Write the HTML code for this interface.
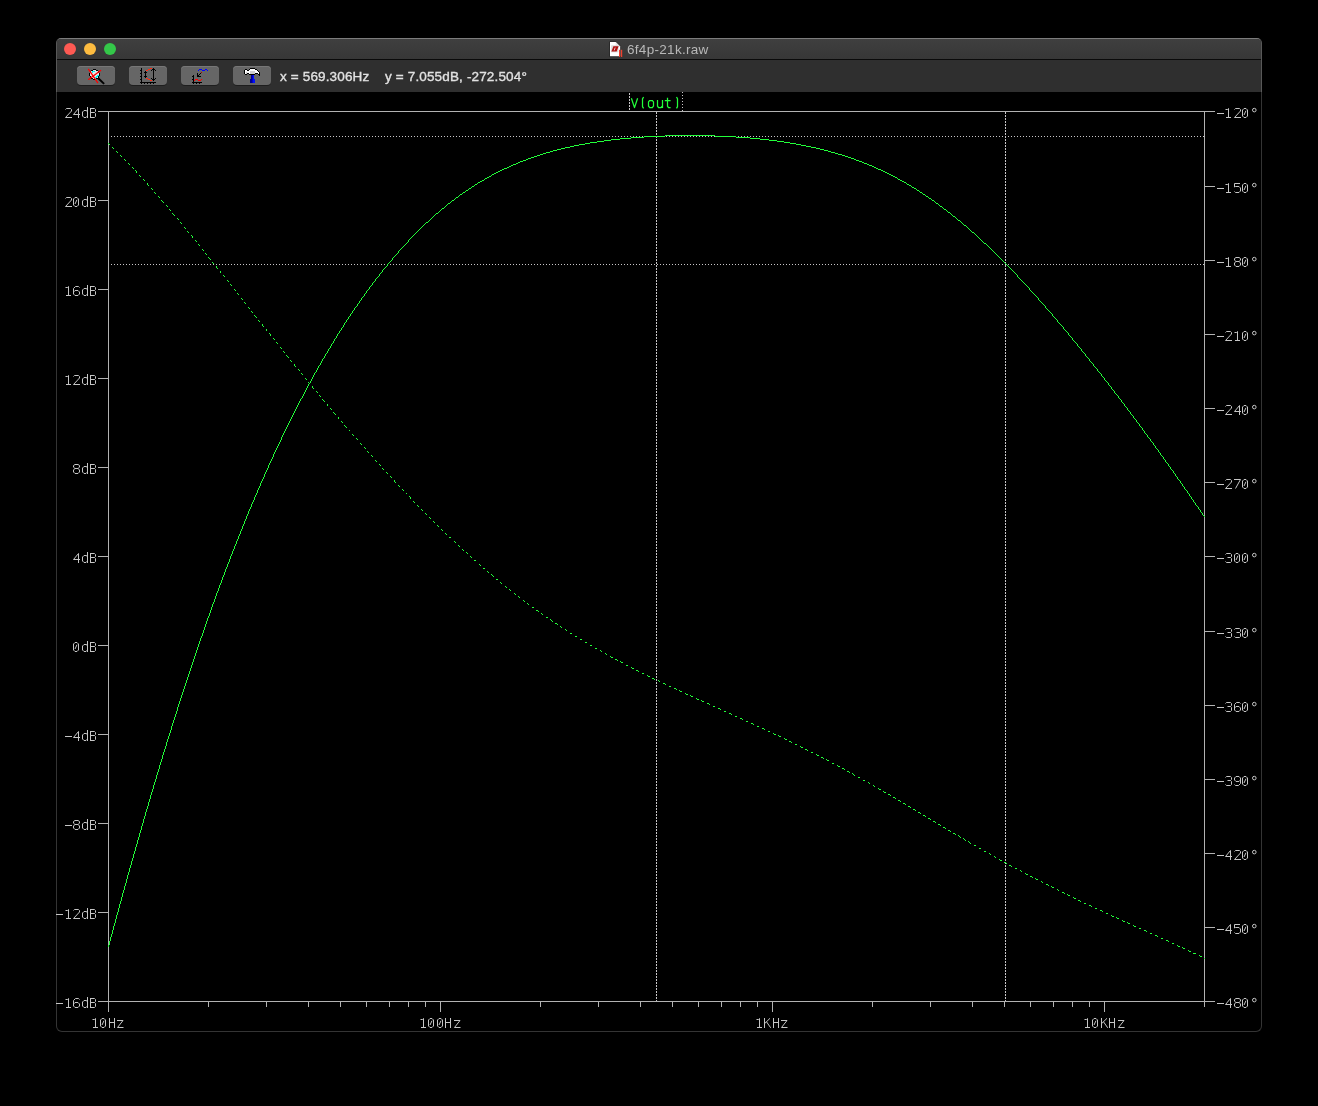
<!DOCTYPE html>
<html><head><meta charset="utf-8"><title>6f4p-21k.raw</title>
<style>
html,body{margin:0;padding:0;background:#000;}
body{width:1318px;height:1106px;position:relative;overflow:hidden;font-family:"Liberation Sans",sans-serif;}
.chrome{position:absolute;left:56px;top:38px;width:1206px;height:54px;box-sizing:border-box;border:1px solid #585858;border-top-color:#7c7c7c;border-bottom:none;border-radius:5px 5px 0 0;background:#2f2f2f;overflow:hidden;}
.body{position:absolute;left:56px;top:92px;width:1206px;height:940px;box-sizing:border-box;border:1px solid #343434;border-top:none;border-radius:0 0 6px 6px;background:#000;}
.tb{position:absolute;left:0;top:0;right:0;height:20px;background:linear-gradient(#3f3f3f,#373737);border-bottom:1px solid #0a0a0a;}
.tool{position:absolute;left:0;top:21px;right:0;height:32px;background:#2f2f2f;}
.dot{position:absolute;top:4px;width:12px;height:12px;border-radius:50%;}
.title{position:absolute;left:570px;top:0;height:20px;line-height:21px;font-size:13.5px;letter-spacing:0.3px;color:#b8b8b8;white-space:nowrap;will-change:transform;}
.btn{position:absolute;top:6px;width:38px;height:19px;border-radius:4px;background:#666666;box-shadow:0 1px 0 rgba(0,0,0,.35), inset 0 1px 0 #777;}
.read{position:absolute;top:0;height:32px;line-height:33px;font-size:13.5px;letter-spacing:0.15px;color:#e2e2e2;white-space:nowrap;-webkit-text-stroke:0.35px #e2e2e2;will-change:transform;}
</style></head><body>
<div class="body"></div>
<div class="chrome">
 <div class="tb">
  <div class="dot" style="left:7px;background:#fe5a53"></div>
  <div class="dot" style="left:27px;background:#fdbc40"></div>
  <div class="dot" style="left:47px;background:#34c749"></div>
  <div class="title">6f4p-21k.raw</div>
 </div>
 <div class="tool">
  <div class="btn" style="left:20px"></div>
  <div class="btn" style="left:72px"></div>
  <div class="btn" style="left:124px"></div>
  <div class="btn" style="left:176px"></div>
  <div class="read" id="rx" style="left:223px">x = 569.306Hz</div>
  <div class="read" id="ry" style="left:328px">y = 7.055dB, -272.504°</div>
 </div>
</div>
<svg width="1318" height="1106" style="position:absolute;left:0;top:0" shape-rendering="crispEdges">
<g stroke="#b2b2b2" stroke-width="1" fill="none">
<path d="M108.0 111.5H1205.0M108.0 1001.5H1205.0M108.5 111.5V1012.0M1204.5 111.5V1007.0"/>
<path d="M98.0 111.5H108.5M98.0 200.5H108.5M98.0 289.5H108.5M98.0 378.5H108.5M98.0 467.5H108.5M98.0 556.5H108.5M98.0 645.5H108.5M98.0 734.5H108.5M98.0 823.5H108.5M98.0 912.5H108.5M98.0 1001.5H108.5M1204.5 111.5H1215.0M1204.5 186.5H1215.0M1204.5 260.5H1215.0M1204.5 334.5H1215.0M1204.5 408.5H1215.0M1204.5 482.5H1215.0M1204.5 556.5H1215.0M1204.5 631.5H1215.0M1204.5 705.5H1215.0M1204.5 779.5H1215.0M1204.5 853.5H1215.0M1204.5 927.5H1215.0M1204.5 1001.5H1215.0M208.5 1001.5V1007.0M266.5 1001.5V1007.0M308.5 1001.5V1007.0M340.5 1001.5V1007.0M366.5 1001.5V1007.0M389.5 1001.5V1007.0M408.5 1001.5V1007.0M425.5 1001.5V1007.0M440.5 1001.5V1012.0M540.5 1001.5V1007.0M598.5 1001.5V1007.0M640.5 1001.5V1007.0M672.5 1001.5V1007.0M698.5 1001.5V1007.0M721.5 1001.5V1007.0M740.5 1001.5V1007.0M757.5 1001.5V1007.0M772.5 1001.5V1012.0M872.5 1001.5V1007.0M930.5 1001.5V1007.0M972.5 1001.5V1007.0M1004.5 1001.5V1007.0M1030.5 1001.5V1007.0M1053.5 1001.5V1007.0M1072.5 1001.5V1007.0M1089.5 1001.5V1007.0M1104.5 1001.5V1012.0"/>
</g>
<g stroke="#c8c6c8" stroke-width="1" fill="none">
<path d="M111 136.5H1204M111 264.5H1204" stroke-dasharray="1 2"/>
<path d="M656.5 112V1001M1005.5 112V1001" stroke-dasharray="2 1"/>
<path d="M629.5 93V111" stroke-dasharray="2 1"/>
<path d="M682.5 92V111" stroke-dasharray="1 2"/>
</g>
<path d="M108 945h1v2h-1zM109 941h1v4h-1zM110 937h1v4h-1zM111 934h1v3h-1zM112 930h1v4h-1zM113 926h1v4h-1zM114 923h1v3h-1zM115 919h1v4h-1zM116 915h1v4h-1zM117 912h1v3h-1zM118 908h1v4h-1zM119 904h1v4h-1zM120 901h1v3h-1zM121 897h1v4h-1zM122 893h1v4h-1zM123 890h1v3h-1zM124 886h1v4h-1zM125 883h1v3h-1zM126 879h1v4h-1zM127 875h1v4h-1zM128 872h1v3h-1zM129 868h1v4h-1zM130 865h1v3h-1zM131 861h1v4h-1zM132 858h1v3h-1zM133 854h1v4h-1zM134 851h1v3h-1zM135 847h1v4h-1zM136 844h1v3h-1zM137 840h1v4h-1zM138 837h1v3h-1zM139 833h1v4h-1zM140 830h1v3h-1zM141 826h1v4h-1zM142 823h1v3h-1zM143 819h1v4h-1zM144 816h1v3h-1zM145 812h1v4h-1zM146 809h1v3h-1zM147 806h1v3h-1zM148 802h1v4h-1zM149 799h1v3h-1zM150 795h1v4h-1zM151 792h1v3h-1zM152 789h1v3h-1zM153 785h1v4h-1zM154 782h1v3h-1zM155 779h1v3h-1zM156 775h1v4h-1zM157 772h1v3h-1zM158 769h1v3h-1zM159 765h1v4h-1zM160 762h1v3h-1zM161 759h1v3h-1zM162 755h1v4h-1zM163 752h1v3h-1zM164 749h1v3h-1zM165 746h1v3h-1zM166 742h1v4h-1zM167 739h1v3h-1zM168 736h1v3h-1zM169 733h1v3h-1zM170 730h1v3h-1zM171 726h1v4h-1zM172 723h1v3h-1zM173 720h1v3h-1zM174 717h1v3h-1zM175 714h1v3h-1zM176 711h1v3h-1zM177 707h1v4h-1zM178 704h1v3h-1zM179 701h1v3h-1zM180 698h1v3h-1zM181 695h1v3h-1zM182 692h1v3h-1zM183 689h1v3h-1zM184 686h1v3h-1zM185 683h1v3h-1zM186 680h1v3h-1zM187 677h1v3h-1zM188 674h1v3h-1zM189 671h1v3h-1zM190 668h1v3h-1zM191 665h1v3h-1zM192 662h1v3h-1zM193 659h1v3h-1zM194 656h1v3h-1zM195 653h1v3h-1zM196 650h1v3h-1zM197 647h1v3h-1zM198 644h1v3h-1zM199 641h1v3h-1zM200 638h1v3h-1zM201 636h1v2h-1zM202 633h1v3h-1zM203 630h1v3h-1zM204 627h1v3h-1zM205 624h1v3h-1zM206 621h1v3h-1zM207 618h1v3h-1zM208 616h1v2h-1zM209 613h1v3h-1zM210 610h1v3h-1zM211 607h1v3h-1zM212 604h1v3h-1zM213 602h1v2h-1zM214 599h1v3h-1zM215 596h1v3h-1zM216 593h1v3h-1zM217 591h1v2h-1zM218 588h1v3h-1zM219 585h1v3h-1zM220 583h1v2h-1zM221 580h1v3h-1zM222 577h1v3h-1zM223 575h1v2h-1zM224 572h1v3h-1zM225 569h1v3h-1zM226 567h1v2h-1zM227 564h1v3h-1zM228 562h1v2h-1zM229 559h1v3h-1zM230 556h1v3h-1zM231 554h1v2h-1zM232 551h1v3h-1zM233 549h1v2h-1zM234 546h1v3h-1zM235 544h1v2h-1zM236 541h1v3h-1zM237 539h1v2h-1zM238 536h1v3h-1zM239 534h1v2h-1zM240 531h1v3h-1zM241 529h1v2h-1zM242 526h1v3h-1zM243 524h1v2h-1zM244 521h1v3h-1zM245 519h1v2h-1zM246 516h1v3h-1zM247 514h1v2h-1zM248 511h1v3h-1zM249 509h1v2h-1zM250 507h1v2h-1zM251 504h1v3h-1zM252 502h1v2h-1zM253 500h1v2h-1zM254 497h1v3h-1zM255 495h1v2h-1zM256 493h1v2h-1zM257 490h1v3h-1zM258 488h1v2h-1zM259 486h1v2h-1zM260 483h1v3h-1zM261 481h1v2h-1zM262 479h1v2h-1zM263 477h1v2h-1zM264 474h1v3h-1zM265 472h1v2h-1zM266 470h1v2h-1zM267 468h1v2h-1zM268 465h1v3h-1zM269 463h1v2h-1zM270 461h1v2h-1zM271 459h1v2h-1zM272 457h1v2h-1zM273 454h1v3h-1zM274 452h1v2h-1zM275 450h1v2h-1zM276 448h1v2h-1zM277 446h1v2h-1zM278 444h1v2h-1zM279 442h1v2h-1zM280 440h1v2h-1zM281 437h1v3h-1zM282 435h1v2h-1zM283 433h1v2h-1zM284 431h1v2h-1zM285 429h1v2h-1zM286 427h1v2h-1zM287 425h1v2h-1zM288 423h1v2h-1zM289 421h1v2h-1zM290 419h1v2h-1zM291 417h1v2h-1zM292 415h1v2h-1zM293 413h1v2h-1zM294 411h1v2h-1zM295 409h1v2h-1zM296 407h1v2h-1zM297 405h1v2h-1zM298 403h1v2h-1zM299 401h1v2h-1zM300 399h1v2h-1zM301 398h1v1h-1zM302 396h1v2h-1zM303 394h1v2h-1zM304 392h1v2h-1zM305 390h1v2h-1zM306 388h1v2h-1zM307 386h1v2h-1zM308 384h1v2h-1zM309 383h1v1h-1zM310 381h1v2h-1zM311 379h1v2h-1zM312 377h1v2h-1zM313 375h1v2h-1zM314 373h1v2h-1zM315 372h1v1h-1zM316 370h1v2h-1zM317 368h1v2h-1zM318 366h1v2h-1zM319 365h1v1h-1zM320 363h1v2h-1zM321 361h1v2h-1zM322 359h1v2h-1zM323 358h1v1h-1zM324 356h1v2h-1zM325 354h1v2h-1zM326 353h1v1h-1zM327 351h1v2h-1zM328 349h1v2h-1zM329 348h1v1h-1zM330 346h1v2h-1zM331 344h1v2h-1zM332 343h1v1h-1zM333 341h1v2h-1zM334 339h1v2h-1zM335 338h1v1h-1zM336 336h1v2h-1zM337 334h1v2h-1zM338 333h1v1h-1zM339 331h1v2h-1zM340 330h1v1h-1zM341 328h1v2h-1zM342 327h1v1h-1zM343 325h1v2h-1zM344 323h1v2h-1zM345 322h1v1h-1zM346 320h1v2h-1zM347 319h1v1h-1zM348 317h1v2h-1zM349 316h1v1h-1zM350 314h1v2h-1zM351 313h1v1h-1zM352 311h1v2h-1zM353 310h1v1h-1zM354 308h1v2h-1zM355 307h1v1h-1zM356 306h1v1h-1zM357 304h1v2h-1zM358 303h1v1h-1zM359 301h1v2h-1zM360 300h1v1h-1zM361 298h1v2h-1zM362 297h1v1h-1zM363 296h1v1h-1zM364 294h1v2h-1zM365 293h1v1h-1zM366 291h1v2h-1zM367 290h1v1h-1zM368 289h1v1h-1zM369 287h1v2h-1zM370 286h1v1h-1zM371 285h1v1h-1zM372 283h1v2h-1zM373 282h1v1h-1zM374 281h1v1h-1zM375 279h1v2h-1zM376 278h1v1h-1zM377 277h1v1h-1zM378 276h1v1h-1zM379 274h1v2h-1zM380 273h1v1h-1zM381 272h1v1h-1zM382 270h1v2h-1zM383 269h1v1h-1zM384 268h1v1h-1zM385 267h1v1h-1zM386 266h1v1h-1zM387 264h1v2h-1zM388 263h1v1h-1zM389 262h1v1h-1zM390 261h1v1h-1zM391 260h1v1h-1zM392 258h1v2h-1zM393 257h1v1h-1zM394 256h1v1h-1zM395 255h1v1h-1zM396 254h1v1h-1zM397 253h1v1h-1zM398 251h1v2h-1zM399 250h1v1h-1zM400 249h1v1h-1zM401 248h1v1h-1zM402 247h1v1h-1zM403 246h1v1h-1zM404 245h1v1h-1zM405 244h1v1h-1zM406 243h1v1h-1zM407 242h1v1h-1zM408 240h1v2h-1zM409 239h1v1h-1zM410 238h1v1h-1zM411 237h1v1h-1zM412 236h1v1h-1zM413 235h1v1h-1zM414 234h1v1h-1zM415 233h1v1h-1zM416 232h1v1h-1zM417 231h1v1h-1zM418 230h1v1h-1zM419 229h1v1h-1zM420 228h1v1h-1zM421 227h1v1h-1zM422 226h1v1h-1zM423 225h1v1h-1zM424 224h1v1h-1zM425 223h1v1h-1zM426 222h2v1h-2zM428 221h1v1h-1zM429 220h1v1h-1zM430 219h1v1h-1zM431 218h1v1h-1zM432 217h1v1h-1zM433 216h1v1h-1zM434 215h1v1h-1zM435 214h1v1h-1zM436 213h2v1h-2zM438 212h1v1h-1zM439 211h1v1h-1zM440 210h1v1h-1zM441 209h1v1h-1zM442 208h2v1h-2zM444 207h1v1h-1zM445 206h1v1h-1zM446 205h1v1h-1zM447 204h1v1h-1zM448 203h2v1h-2zM450 202h1v1h-1zM451 201h1v1h-1zM452 200h2v1h-2zM454 199h1v1h-1zM455 198h1v1h-1zM456 197h2v1h-2zM458 196h1v1h-1zM459 195h1v1h-1zM460 194h2v1h-2zM462 193h1v1h-1zM463 192h2v1h-2zM465 191h1v1h-1zM466 190h2v1h-2zM468 189h1v1h-1zM469 188h2v1h-2zM471 187h1v1h-1zM472 186h2v1h-2zM474 185h1v1h-1zM475 184h2v1h-2zM477 183h1v1h-1zM478 182h2v1h-2zM480 181h2v1h-2zM482 180h2v1h-2zM484 179h1v1h-1zM485 178h2v1h-2zM487 177h2v1h-2zM489 176h2v1h-2zM491 175h1v1h-1zM492 174h2v1h-2zM494 173h2v1h-2zM496 172h2v1h-2zM498 171h2v1h-2zM500 170h2v1h-2zM502 169h2v1h-2zM504 168h3v1h-3zM507 167h2v1h-2zM509 166h2v1h-2zM511 165h2v1h-2zM513 164h3v1h-3zM516 163h2v1h-2zM518 162h2v1h-2zM520 161h3v1h-3zM523 160h3v1h-3zM526 159h2v1h-2zM528 158h3v1h-3zM531 157h3v1h-3zM534 156h3v1h-3zM537 155h3v1h-3zM540 154h3v1h-3zM543 153h3v1h-3zM546 152h4v1h-4zM550 151h3v1h-3zM553 150h4v1h-4zM557 149h4v1h-4zM561 148h4v1h-4zM565 147h5v1h-5zM570 146h4v1h-4zM574 145h5v1h-5zM579 144h6v1h-6zM585 143h5v1h-5zM590 142h7v1h-7zM597 141h7v1h-7zM604 140h7v1h-7zM611 139h9v1h-9zM620 138h11v1h-11zM631 137h13v1h-13zM644 136h21v1h-21zM665 135h50v1h-50zM715 136h21v1h-21zM736 137h14v1h-14zM750 138h10v1h-10zM760 139h9v1h-9zM769 140h8v1h-8zM777 141h7v1h-7zM784 142h6v1h-6zM790 143h6v1h-6zM796 144h5v1h-5zM801 145h5v1h-5zM806 146h5v1h-5zM811 147h5v1h-5zM816 148h4v1h-4zM820 149h4v1h-4zM824 150h4v1h-4zM828 151h3v1h-3zM831 152h4v1h-4zM835 153h3v1h-3zM838 154h4v1h-4zM842 155h3v1h-3zM845 156h3v1h-3zM848 157h3v1h-3zM851 158h3v1h-3zM854 159h2v1h-2zM856 160h3v1h-3zM859 161h3v1h-3zM862 162h2v1h-2zM864 163h3v1h-3zM867 164h2v1h-2zM869 165h3v1h-3zM872 166h2v1h-2zM874 167h2v1h-2zM876 168h2v1h-2zM878 169h3v1h-3zM881 170h2v1h-2zM883 171h2v1h-2zM885 172h2v1h-2zM887 173h2v1h-2zM889 174h2v1h-2zM891 175h2v1h-2zM893 176h2v1h-2zM895 177h2v1h-2zM897 178h1v1h-1zM898 179h2v1h-2zM900 180h2v1h-2zM902 181h2v1h-2zM904 182h2v1h-2zM906 183h1v1h-1zM907 184h2v1h-2zM909 185h2v1h-2zM911 186h1v1h-1zM912 187h2v1h-2zM914 188h2v1h-2zM916 189h1v1h-1zM917 190h2v1h-2zM919 191h1v1h-1zM920 192h2v1h-2zM922 193h1v1h-1zM923 194h2v1h-2zM925 195h1v1h-1zM926 196h2v1h-2zM928 197h1v1h-1zM929 198h2v1h-2zM931 199h1v1h-1zM932 200h2v1h-2zM934 201h1v1h-1zM935 202h1v1h-1zM936 203h2v1h-2zM938 204h1v1h-1zM939 205h1v1h-1zM940 206h2v1h-2zM942 207h1v1h-1zM943 208h1v1h-1zM944 209h2v1h-2zM946 210h1v1h-1zM947 211h1v1h-1zM948 212h2v1h-2zM950 213h1v1h-1zM951 214h1v1h-1zM952 215h1v1h-1zM953 216h2v1h-2zM955 217h1v1h-1zM956 218h1v1h-1zM957 219h1v1h-1zM958 220h2v1h-2zM960 221h1v1h-1zM961 222h1v1h-1zM962 223h1v1h-1zM963 224h1v1h-1zM964 225h2v1h-2zM966 226h1v1h-1zM967 227h1v1h-1zM968 228h1v1h-1zM969 229h1v1h-1zM970 230h1v1h-1zM971 231h1v1h-1zM972 232h2v1h-2zM974 233h1v1h-1zM975 234h1v1h-1zM976 235h1v1h-1zM977 236h1v1h-1zM978 237h1v1h-1zM979 238h1v1h-1zM980 239h1v1h-1zM981 240h1v1h-1zM982 241h1v1h-1zM983 242h1v1h-1zM984 243h2v1h-2zM986 244h1v1h-1zM987 245h1v1h-1zM988 246h1v1h-1zM989 247h1v1h-1zM990 248h1v1h-1zM991 249h1v1h-1zM992 250h1v1h-1zM993 251h1v1h-1zM994 252h1v1h-1zM995 253h1v1h-1zM996 254h1v1h-1zM997 255h1v1h-1zM998 256h1v1h-1zM999 257h1v1h-1zM1000 258h1v1h-1zM1001 259h1v1h-1zM1002 260h1v1h-1zM1003 261h1v1h-1zM1004 262h1v1h-1zM1005 263h1v1h-1zM1006 264h1v1h-1zM1007 265h1v1h-1zM1008 266h1v1h-1zM1009 267h1v1h-1zM1010 268h1v1h-1zM1011 269h1v1h-1zM1012 270h1v1h-1zM1013 271h1v1h-1zM1014 272h1v1h-1zM1015 273h1v1h-1zM1016 274h1v1h-1zM1017 275h1v2h-1zM1018 277h1v1h-1zM1019 278h1v1h-1zM1020 279h1v1h-1zM1021 280h1v1h-1zM1022 281h1v1h-1zM1023 282h1v1h-1zM1024 283h1v1h-1zM1025 284h1v1h-1zM1026 285h1v1h-1zM1027 286h1v1h-1zM1028 287h1v1h-1zM1029 288h1v2h-1zM1030 290h1v1h-1zM1031 291h1v1h-1zM1032 292h1v1h-1zM1033 293h1v1h-1zM1034 294h1v1h-1zM1035 295h1v1h-1zM1036 296h1v1h-1zM1037 297h1v1h-1zM1038 298h1v2h-1zM1039 300h1v1h-1zM1040 301h1v1h-1zM1041 302h1v1h-1zM1042 303h1v1h-1zM1043 304h1v1h-1zM1044 305h1v1h-1zM1045 306h1v2h-1zM1046 308h1v1h-1zM1047 309h1v1h-1zM1048 310h1v1h-1zM1049 311h1v1h-1zM1050 312h1v1h-1zM1051 313h1v1h-1zM1052 314h1v2h-1zM1053 316h1v1h-1zM1054 317h1v1h-1zM1055 318h1v1h-1zM1056 319h1v1h-1zM1057 320h1v2h-1zM1058 322h1v1h-1zM1059 323h1v1h-1zM1060 324h1v1h-1zM1061 325h1v1h-1zM1062 326h1v1h-1zM1063 327h1v2h-1zM1064 329h1v1h-1zM1065 330h1v1h-1zM1066 331h1v1h-1zM1067 332h1v1h-1zM1068 333h1v2h-1zM1069 335h1v1h-1zM1070 336h1v1h-1zM1071 337h1v1h-1zM1072 338h1v2h-1zM1073 340h1v1h-1zM1074 341h1v1h-1zM1075 342h1v1h-1zM1076 343h1v1h-1zM1077 344h1v2h-1zM1078 346h1v1h-1zM1079 347h1v1h-1zM1080 348h1v1h-1zM1081 349h1v2h-1zM1082 351h1v1h-1zM1083 352h1v1h-1zM1084 353h1v1h-1zM1085 354h1v2h-1zM1086 356h1v1h-1zM1087 357h1v1h-1zM1088 358h1v1h-1zM1089 359h1v2h-1zM1090 361h1v1h-1zM1091 362h1v1h-1zM1092 363h1v1h-1zM1093 364h1v2h-1zM1094 366h1v1h-1zM1095 367h1v1h-1zM1096 368h1v1h-1zM1097 369h1v2h-1zM1098 371h1v1h-1zM1099 372h1v1h-1zM1100 373h1v1h-1zM1101 374h1v2h-1zM1102 376h1v1h-1zM1103 377h1v1h-1zM1104 378h1v2h-1zM1105 380h1v1h-1zM1106 381h1v1h-1zM1107 382h1v1h-1zM1108 383h1v2h-1zM1109 385h1v1h-1zM1110 386h1v1h-1zM1111 387h1v2h-1zM1112 389h1v1h-1zM1113 390h1v1h-1zM1114 391h1v2h-1zM1115 393h1v1h-1zM1116 394h1v1h-1zM1117 395h1v1h-1zM1118 396h1v2h-1zM1119 398h1v1h-1zM1120 399h1v1h-1zM1121 400h1v2h-1zM1122 402h1v1h-1zM1123 403h1v1h-1zM1124 404h1v2h-1zM1125 406h1v1h-1zM1126 407h1v1h-1zM1127 408h1v2h-1zM1128 410h1v1h-1zM1129 411h1v1h-1zM1130 412h1v2h-1zM1131 414h1v1h-1zM1132 415h1v1h-1zM1133 416h1v2h-1zM1134 418h1v1h-1zM1135 419h1v1h-1zM1136 420h1v2h-1zM1137 422h1v1h-1zM1138 423h1v1h-1zM1139 424h1v2h-1zM1140 426h1v1h-1zM1141 427h1v1h-1zM1142 428h1v2h-1zM1143 430h1v1h-1zM1144 431h1v2h-1zM1145 433h1v1h-1zM1146 434h1v1h-1zM1147 435h1v2h-1zM1148 437h1v1h-1zM1149 438h1v1h-1zM1150 439h1v2h-1zM1151 441h1v1h-1zM1152 442h1v1h-1zM1153 443h1v2h-1zM1154 445h1v1h-1zM1155 446h1v2h-1zM1156 448h1v1h-1zM1157 449h1v1h-1zM1158 450h1v2h-1zM1159 452h1v1h-1zM1160 453h1v2h-1zM1161 455h1v1h-1zM1162 456h1v1h-1zM1163 457h1v2h-1zM1164 459h1v1h-1zM1165 460h1v2h-1zM1166 462h1v1h-1zM1167 463h1v1h-1zM1168 464h1v2h-1zM1169 466h1v1h-1zM1170 467h1v2h-1zM1171 469h1v1h-1zM1172 470h1v1h-1zM1173 471h1v2h-1zM1174 473h1v1h-1zM1175 474h1v2h-1zM1176 476h1v1h-1zM1177 477h1v2h-1zM1178 479h1v1h-1zM1179 480h1v1h-1zM1180 481h1v2h-1zM1181 483h1v1h-1zM1182 484h1v2h-1zM1183 486h1v1h-1zM1184 487h1v2h-1zM1185 489h1v1h-1zM1186 490h1v1h-1zM1187 491h1v2h-1zM1188 493h1v1h-1zM1189 494h1v2h-1zM1190 496h1v1h-1zM1191 497h1v2h-1zM1192 499h1v1h-1zM1193 500h1v2h-1zM1194 502h1v1h-1zM1195 503h1v2h-1zM1196 505h1v1h-1zM1197 506h1v1h-1zM1198 507h1v2h-1zM1199 509h1v1h-1zM1200 510h1v2h-1zM1201 512h1v1h-1zM1202 513h1v2h-1zM1203 515h1v1h-1zM1204 516h1v1h-1z" fill="#22ff3a"/>
<path d="M108 143h1v1h-1zM109 144h1v1h-1zM112 147h1v1h-1zM113 148h1v1h-1zM116 151h1v1h-1zM117 152h1v1h-1zM120 155h1v1h-1zM121 156h1v1h-1zM124 159h1v1h-1zM125 160h1v1h-1zM128 163h1v1h-1zM129 164h1v1h-1zM132 167h1v1h-1zM133 168h1v1h-1zM135 170h1v1h-1zM136 171h1v2h-1zM139 175h1v1h-1zM140 176h1v1h-1zM143 179h1v1h-1zM144 180h1v1h-1zM147 183h1v2h-1zM148 185h1v1h-1zM151 188h1v1h-1zM152 189h1v1h-1zM154 192h1v1h-1zM155 193h1v1h-1zM158 196h1v1h-1zM159 197h1v1h-1zM161 200h1v1h-1zM162 201h1v1h-1zM163 202h1v1h-1zM166 205h1v1h-1zM167 206h1v1h-1zM169 209h1v1h-1zM170 210h1v1h-1zM172 213h1v1h-1zM173 214h1v1h-1zM174 215h1v1h-1zM177 218h1v1h-1zM178 219h1v1h-1zM180 222h1v1h-1zM181 223h1v1h-1zM184 227h1v1h-1zM185 228h1v1h-1zM187 231h1v1h-1zM188 232h1v1h-1zM191 235h1v1h-1zM192 236h1v2h-1zM195 240h1v1h-1zM196 241h1v1h-1zM198 244h1v1h-1zM199 245h1v1h-1zM202 249h1v1h-1zM203 250h1v1h-1zM205 253h1v1h-1zM206 254h1v1h-1zM208 257h1v1h-1zM209 258h1v1h-1zM210 259h1v1h-1zM212 262h1v1h-1zM213 263h1v1h-1zM216 266h1v2h-1zM217 268h1v1h-1zM220 271h1v2h-1zM223 275h1v1h-1zM224 276h1v1h-1zM227 280h1v1h-1zM228 281h1v1h-1zM230 284h1v1h-1zM231 285h1v1h-1zM234 289h1v1h-1zM235 290h1v1h-1zM237 293h1v1h-1zM238 294h1v1h-1zM241 298h1v1h-1zM242 299h1v1h-1zM244 302h1v1h-1zM245 303h1v1h-1zM248 307h1v1h-1zM249 308h1v1h-1zM251 311h1v1h-1zM252 312h1v1h-1zM254 315h1v1h-1zM255 316h1v1h-1zM256 317h1v1h-1zM258 320h1v1h-1zM259 321h1v1h-1zM262 324h1v2h-1zM263 326h1v1h-1zM266 329h1v2h-1zM269 333h1v1h-1zM270 334h1v2h-1zM273 338h1v1h-1zM274 339h1v1h-1zM276 342h1v1h-1zM277 343h1v1h-1zM280 347h1v1h-1zM281 348h1v1h-1zM283 351h1v1h-1zM284 352h1v1h-1zM286 355h1v1h-1zM287 356h1v1h-1zM288 357h1v1h-1zM290 360h1v1h-1zM291 361h1v1h-1zM294 364h1v2h-1zM295 366h1v1h-1zM298 369h1v1h-1zM299 370h1v1h-1zM301 373h1v1h-1zM302 374h1v1h-1zM305 378h1v1h-1zM306 379h1v1h-1zM308 382h1v1h-1zM309 383h1v1h-1zM312 386h1v2h-1zM313 388h1v1h-1zM316 391h1v1h-1zM317 392h1v1h-1zM319 395h1v1h-1zM320 396h1v1h-1zM322 399h1v1h-1zM323 400h1v1h-1zM324 401h1v1h-1zM327 404h1v2h-1zM330 408h1v1h-1zM331 409h1v1h-1zM333 412h1v1h-1zM334 413h1v1h-1zM335 414h1v1h-1zM338 417h1v2h-1zM341 421h1v1h-1zM342 422h1v1h-1zM344 425h1v1h-1zM345 426h1v1h-1zM346 427h1v1h-1zM349 430h1v1h-1zM352 434h1v1h-1zM353 435h1v1h-1zM356 438h1v1h-1zM357 439h1v1h-1zM360 443h1v1h-1zM361 444h1v1h-1zM364 447h1v1h-1zM365 448h1v1h-1zM367 451h1v1h-1zM368 452h1v1h-1zM371 455h1v1h-1zM372 456h1v1h-1zM375 460h1v1h-1zM376 461h1v1h-1zM379 464h1v1h-1zM380 465h1v1h-1zM382 468h1v1h-1zM383 469h1v1h-1zM386 472h1v1h-1zM387 473h1v1h-1zM390 476h1v1h-1zM391 477h1v1h-1zM394 480h1v2h-1zM395 482h1v1h-1zM398 485h1v1h-1zM399 486h1v1h-1zM402 489h1v1h-1zM403 490h1v1h-1zM406 493h1v1h-1zM409 496h1v1h-1zM410 497h1v2h-1zM413 501h1v1h-1zM414 502h1v1h-1zM417 505h1v1h-1zM418 506h1v1h-1zM421 509h1v1h-1zM422 510h1v1h-1zM425 513h1v1h-1zM426 514h1v1h-1zM429 517h1v1h-1zM430 518h1v1h-1zM433 521h1v1h-1zM434 522h1v1h-1zM437 525h1v1h-1zM438 526h1v1h-1zM441 529h1v1h-1zM442 530h1v1h-1zM445 533h1v1h-1zM446 534h1v1h-1zM449 537h2v1h-2zM454 541h1v1h-1zM455 542h1v1h-1zM458 545h1v1h-1zM459 546h1v1h-1zM462 549h1v1h-1zM463 550h1v1h-1zM466 552h1v1h-1zM467 553h1v1h-1zM470 556h1v1h-1zM471 557h1v1h-1zM474 560h2v1h-2zM479 564h1v1h-1zM480 565h1v1h-1zM483 568h2v1h-2zM487 571h1v1h-1zM488 572h1v1h-1zM491 574h1v1h-1zM492 575h1v1h-1zM493 576h1v1h-1zM496 579h2v1h-2zM500 582h1v1h-1zM501 583h1v1h-1zM505 586h1v1h-1zM506 587h1v1h-1zM509 589h1v1h-1zM510 590h1v1h-1zM514 593h1v1h-1zM515 594h1v1h-1zM518 596h1v1h-1zM519 597h1v1h-1zM523 600h1v1h-1zM524 601h1v1h-1zM527 603h1v1h-1zM528 604h1v1h-1zM532 607h2v1h-2zM536 610h2v1h-2zM538 611h1v1h-1zM541 613h1v1h-1zM542 614h1v1h-1zM546 617h2v1h-2zM550 619h1v1h-1zM551 620h1v1h-1zM552 621h1v1h-1zM555 623h2v1h-2zM557 624h1v1h-1zM560 626h1v1h-1zM561 627h1v1h-1zM565 629h1v1h-1zM566 630h1v1h-1zM570 633h2v1h-2zM575 636h2v1h-2zM580 639h2v1h-2zM585 642h2v1h-2zM590 645h2v1h-2zM595 648h2v1h-2zM600 650h1v1h-1zM601 651h1v1h-1zM605 653h1v1h-1zM606 654h1v1h-1zM610 656h1v1h-1zM611 657h2v1h-2zM615 659h2v1h-2zM617 660h1v1h-1zM620 661h1v1h-1zM621 662h2v1h-2zM626 665h2v1h-2zM631 667h1v1h-1zM632 668h2v1h-2zM636 670h2v1h-2zM638 671h1v1h-1zM642 673h2v1h-2zM647 675h1v1h-1zM648 676h2v1h-2zM652 678h2v1h-2zM654 679h1v1h-1zM658 680h1v1h-1zM659 681h1v1h-1zM663 683h2v1h-2zM665 684h1v1h-1zM669 686h2v1h-2zM674 688h2v1h-2zM676 689h1v1h-1zM679 690h1v1h-1zM680 691h2v1h-2zM685 693h1v1h-1zM686 694h2v1h-2zM690 695h1v1h-1zM691 696h2v1h-2zM696 698h1v1h-1zM697 699h2v1h-2zM701 700h1v1h-1zM702 701h2v1h-2zM707 703h2v1h-2zM709 704h1v1h-1zM713 706h2v1h-2zM718 708h2v1h-2zM720 709h1v1h-1zM724 711h2v1h-2zM729 713h2v1h-2zM731 714h1v1h-1zM735 716h2v1h-2zM740 718h2v1h-2zM742 719h1v1h-1zM746 721h2v1h-2zM751 723h2v1h-2zM753 724h1v1h-1zM757 726h2v1h-2zM762 728h2v1h-2zM764 729h1v1h-1zM768 731h2v1h-2zM773 733h1v1h-1zM774 734h2v1h-2zM778 735h1v1h-1zM779 736h2v1h-2zM784 738h1v1h-1zM785 739h2v1h-2zM789 741h2v1h-2zM791 742h1v1h-1zM795 744h2v1h-2zM800 746h1v1h-1zM801 747h2v1h-2zM805 749h2v1h-2zM807 750h1v1h-1zM811 752h2v1h-2zM816 754h1v1h-1zM817 755h2v1h-2zM821 757h2v1h-2zM823 758h1v1h-1zM826 759h1v1h-1zM827 760h2v1h-2zM832 763h2v1h-2zM837 765h1v1h-1zM838 766h2v1h-2zM842 768h2v1h-2zM844 769h1v1h-1zM847 771h2v1h-2zM849 772h1v1h-1zM852 773h1v1h-1zM853 774h1v1h-1zM854 775h1v1h-1zM858 777h2v1h-2zM863 780h2v1h-2zM868 782h1v1h-1zM869 783h1v1h-1zM873 785h1v1h-1zM874 786h1v1h-1zM878 788h1v1h-1zM879 789h2v1h-2zM883 791h1v1h-1zM884 792h2v1h-2zM888 794h2v1h-2zM890 795h1v1h-1zM893 797h2v1h-2zM895 798h1v1h-1zM898 800h2v1h-2zM900 801h1v1h-1zM903 803h2v1h-2zM905 804h1v1h-1zM908 806h2v1h-2zM910 807h1v1h-1zM913 809h2v1h-2zM915 810h1v1h-1zM918 812h2v1h-2zM920 813h1v1h-1zM923 815h2v1h-2zM925 816h1v1h-1zM928 818h2v1h-2zM930 819h1v1h-1zM933 821h2v1h-2zM935 822h1v1h-1zM938 824h2v1h-2zM940 825h1v1h-1zM943 827h2v1h-2zM945 828h1v1h-1zM948 830h2v1h-2zM950 831h1v1h-1zM953 833h2v1h-2zM955 834h1v1h-1zM958 835h1v1h-1zM959 836h1v1h-1zM960 837h1v1h-1zM963 838h1v1h-1zM964 839h1v1h-1zM965 840h1v1h-1zM968 841h1v1h-1zM969 842h1v1h-1zM970 843h1v1h-1zM974 845h2v1h-2zM979 848h2v1h-2zM984 851h2v1h-2zM989 853h1v1h-1zM990 854h1v1h-1zM994 856h1v1h-1zM995 857h1v1h-1zM999 859h1v1h-1zM1000 860h2v1h-2zM1004 862h2v1h-2zM1006 863h1v1h-1zM1009 865h2v1h-2zM1011 866h1v1h-1zM1015 868h2v1h-2zM1020 870h1v1h-1zM1021 871h1v1h-1zM1025 873h1v1h-1zM1026 874h2v1h-2zM1030 876h2v1h-2zM1032 877h1v1h-1zM1035 878h1v1h-1zM1036 879h2v1h-2zM1041 881h1v1h-1zM1042 882h1v1h-1zM1046 884h2v1h-2zM1048 885h1v1h-1zM1051 886h1v1h-1zM1052 887h2v1h-2zM1057 889h1v1h-1zM1058 890h1v1h-1zM1062 892h2v1h-2zM1064 893h1v1h-1zM1067 894h1v1h-1zM1068 895h2v1h-2zM1073 897h1v1h-1zM1074 898h2v1h-2zM1078 900h2v1h-2zM1080 901h1v1h-1zM1084 903h2v1h-2zM1089 905h2v1h-2zM1091 906h1v1h-1zM1095 908h2v1h-2zM1100 910h2v1h-2zM1102 911h1v1h-1zM1106 913h2v1h-2zM1111 915h1v1h-1zM1112 916h2v1h-2zM1116 917h1v1h-1zM1117 918h2v1h-2zM1122 920h1v1h-1zM1123 921h2v1h-2zM1127 922h1v1h-1zM1128 923h2v1h-2zM1133 925h1v1h-1zM1134 926h2v1h-2zM1139 928h2v1h-2zM1144 930h2v1h-2zM1146 931h1v1h-1zM1150 933h2v1h-2zM1155 935h2v1h-2zM1157 936h1v1h-1zM1161 938h2v1h-2zM1166 940h2v1h-2zM1168 941h1v1h-1zM1172 943h2v1h-2zM1177 945h1v1h-1zM1178 946h2v1h-2zM1182 947h1v1h-1zM1183 948h2v1h-2zM1188 950h1v1h-1zM1189 951h2v1h-2zM1193 953h3v1h-3zM1199 955h1v1h-1zM1200 956h2v1h-2zM1204 958h1v1h-1z" fill="#22ff3a"/>
<g shape-rendering="geometricPrecision" stroke="#c6c6c6" stroke-width="1" fill="none" stroke-linejoin="round" stroke-linecap="butt">
<path transform="translate(65 108)" d="M.5 1.5L1.5 .5H5.5L6.5 1.5V3L.5 9.5H7"/><path transform="translate(73 108)" d="M5.5 .5L.5 6.5H7M5.5 .5V10"/><path transform="translate(82 108)" d="M5.5 -1V10M5.5 4L4.5 2.5H2L.5 4V8L2 9.5H4L5.5 8"/><path transform="translate(90 108)" d="M.5 0V10M.5 .5H4.5L5.5 1.5V3.5L4.5 4.5H.5M4.5 4.5L5.5 5.5V8.5L4.5 9.5H.5"/>
<path transform="translate(65 197)" d="M.5 1.5L1.5 .5H5.5L6.5 1.5V3L.5 9.5H7"/><path transform="translate(73 197)" d="M2 .5H4L5.5 2V8L4 9.5H2L.5 8V2ZM4 2.7L2 7"/><path transform="translate(82 197)" d="M5.5 -1V10M5.5 4L4.5 2.5H2L.5 4V8L2 9.5H4L5.5 8"/><path transform="translate(90 197)" d="M.5 0V10M.5 .5H4.5L5.5 1.5V3.5L4.5 4.5H.5M4.5 4.5L5.5 5.5V8.5L4.5 9.5H.5"/>
<path transform="translate(65 286)" d="M.5 1.5H2.5L3.5 .5V9.5M1 9.5H6"/><path transform="translate(73 286)" d="M6.5 1.5L5.5 .5H2.5L.5 2.5V8L2 9.5H5L6.5 8V6L5 4.5H2L.5 6"/><path transform="translate(82 286)" d="M5.5 -1V10M5.5 4L4.5 2.5H2L.5 4V8L2 9.5H4L5.5 8"/><path transform="translate(90 286)" d="M.5 0V10M.5 .5H4.5L5.5 1.5V3.5L4.5 4.5H.5M4.5 4.5L5.5 5.5V8.5L4.5 9.5H.5"/>
<path transform="translate(65 375)" d="M.5 1.5H2.5L3.5 .5V9.5M1 9.5H6"/><path transform="translate(73 375)" d="M.5 1.5L1.5 .5H5.5L6.5 1.5V3L.5 9.5H7"/><path transform="translate(82 375)" d="M5.5 -1V10M5.5 4L4.5 2.5H2L.5 4V8L2 9.5H4L5.5 8"/><path transform="translate(90 375)" d="M.5 0V10M.5 .5H4.5L5.5 1.5V3.5L4.5 4.5H.5M4.5 4.5L5.5 5.5V8.5L4.5 9.5H.5"/>
<path transform="translate(73 464)" d="M2 .5H5L6.5 1.5V3.2L5 4.5H2L.5 3.2V1.5ZM2 4.5L.5 6V8L2 9.5H5L6.5 8V6L5 4.5"/><path transform="translate(82 464)" d="M5.5 -1V10M5.5 4L4.5 2.5H2L.5 4V8L2 9.5H4L5.5 8"/><path transform="translate(90 464)" d="M.5 0V10M.5 .5H4.5L5.5 1.5V3.5L4.5 4.5H.5M4.5 4.5L5.5 5.5V8.5L4.5 9.5H.5"/>
<path transform="translate(73 553)" d="M5.5 .5L.5 6.5H7M5.5 .5V10"/><path transform="translate(82 553)" d="M5.5 -1V10M5.5 4L4.5 2.5H2L.5 4V8L2 9.5H4L5.5 8"/><path transform="translate(90 553)" d="M.5 0V10M.5 .5H4.5L5.5 1.5V3.5L4.5 4.5H.5M4.5 4.5L5.5 5.5V8.5L4.5 9.5H.5"/>
<path transform="translate(73 642)" d="M2 .5H4L5.5 2V8L4 9.5H2L.5 8V2ZM4 2.7L2 7"/><path transform="translate(82 642)" d="M5.5 -1V10M5.5 4L4.5 2.5H2L.5 4V8L2 9.5H4L5.5 8"/><path transform="translate(90 642)" d="M.5 0V10M.5 .5H4.5L5.5 1.5V3.5L4.5 4.5H.5M4.5 4.5L5.5 5.5V8.5L4.5 9.5H.5"/>
<path transform="translate(65 731)" d="M0 5.5H7"/><path transform="translate(73 731)" d="M5.5 .5L.5 6.5H7M5.5 .5V10"/><path transform="translate(82 731)" d="M5.5 -1V10M5.5 4L4.5 2.5H2L.5 4V8L2 9.5H4L5.5 8"/><path transform="translate(90 731)" d="M.5 0V10M.5 .5H4.5L5.5 1.5V3.5L4.5 4.5H.5M4.5 4.5L5.5 5.5V8.5L4.5 9.5H.5"/>
<path transform="translate(65 820)" d="M0 5.5H7"/><path transform="translate(73 820)" d="M2 .5H5L6.5 1.5V3.2L5 4.5H2L.5 3.2V1.5ZM2 4.5L.5 6V8L2 9.5H5L6.5 8V6L5 4.5"/><path transform="translate(82 820)" d="M5.5 -1V10M5.5 4L4.5 2.5H2L.5 4V8L2 9.5H4L5.5 8"/><path transform="translate(90 820)" d="M.5 0V10M.5 .5H4.5L5.5 1.5V3.5L4.5 4.5H.5M4.5 4.5L5.5 5.5V8.5L4.5 9.5H.5"/>
<path transform="translate(56 909)" d="M0 5.5H7"/><path transform="translate(65 909)" d="M.5 1.5H2.5L3.5 .5V9.5M1 9.5H6"/><path transform="translate(73 909)" d="M.5 1.5L1.5 .5H5.5L6.5 1.5V3L.5 9.5H7"/><path transform="translate(82 909)" d="M5.5 -1V10M5.5 4L4.5 2.5H2L.5 4V8L2 9.5H4L5.5 8"/><path transform="translate(90 909)" d="M.5 0V10M.5 .5H4.5L5.5 1.5V3.5L4.5 4.5H.5M4.5 4.5L5.5 5.5V8.5L4.5 9.5H.5"/>
<path transform="translate(56 998)" d="M0 5.5H7"/><path transform="translate(65 998)" d="M.5 1.5H2.5L3.5 .5V9.5M1 9.5H6"/><path transform="translate(73 998)" d="M6.5 1.5L5.5 .5H2.5L.5 2.5V8L2 9.5H5L6.5 8V6L5 4.5H2L.5 6"/><path transform="translate(82 998)" d="M5.5 -1V10M5.5 4L4.5 2.5H2L.5 4V8L2 9.5H4L5.5 8"/><path transform="translate(90 998)" d="M.5 0V10M.5 .5H4.5L5.5 1.5V3.5L4.5 4.5H.5M4.5 4.5L5.5 5.5V8.5L4.5 9.5H.5"/>
<path transform="translate(1217 108)" d="M0 5.5H7"/><path transform="translate(1225 108)" d="M.5 1.5H2.5L3.5 .5V9.5M1 9.5H6"/><path transform="translate(1234 108)" d="M.5 1.5L1.5 .5H5.5L6.5 1.5V3L.5 9.5H7"/><path transform="translate(1242 108)" d="M2 .5H4L5.5 2V8L4 9.5H2L.5 8V2ZM4 2.7L2 7"/><circle cx="1254.3" cy="110.1" r="1.8"/>
<path transform="translate(1217 183)" d="M0 5.5H7"/><path transform="translate(1225 183)" d="M.5 1.5H2.5L3.5 .5V9.5M1 9.5H6"/><path transform="translate(1234 183)" d="M6 .5H.5V4L1.5 3.5H5L6.5 5V8L5 9.5H1.5L.5 8.5"/><path transform="translate(1242 183)" d="M2 .5H4L5.5 2V8L4 9.5H2L.5 8V2ZM4 2.7L2 7"/><circle cx="1254.3" cy="185.1" r="1.8"/>
<path transform="translate(1217 257)" d="M0 5.5H7"/><path transform="translate(1225 257)" d="M.5 1.5H2.5L3.5 .5V9.5M1 9.5H6"/><path transform="translate(1234 257)" d="M2 .5H5L6.5 1.5V3.2L5 4.5H2L.5 3.2V1.5ZM2 4.5L.5 6V8L2 9.5H5L6.5 8V6L5 4.5"/><path transform="translate(1242 257)" d="M2 .5H4L5.5 2V8L4 9.5H2L.5 8V2ZM4 2.7L2 7"/><circle cx="1254.3" cy="259.1" r="1.8"/>
<path transform="translate(1217 331)" d="M0 5.5H7"/><path transform="translate(1225 331)" d="M.5 1.5L1.5 .5H5.5L6.5 1.5V3L.5 9.5H7"/><path transform="translate(1234 331)" d="M.5 1.5H2.5L3.5 .5V9.5M1 9.5H6"/><path transform="translate(1242 331)" d="M2 .5H4L5.5 2V8L4 9.5H2L.5 8V2ZM4 2.7L2 7"/><circle cx="1254.3" cy="333.1" r="1.8"/>
<path transform="translate(1217 405)" d="M0 5.5H7"/><path transform="translate(1225 405)" d="M.5 1.5L1.5 .5H5.5L6.5 1.5V3L.5 9.5H7"/><path transform="translate(1234 405)" d="M5.5 .5L.5 6.5H7M5.5 .5V10"/><path transform="translate(1242 405)" d="M2 .5H4L5.5 2V8L4 9.5H2L.5 8V2ZM4 2.7L2 7"/><circle cx="1254.3" cy="407.1" r="1.8"/>
<path transform="translate(1217 479)" d="M0 5.5H7"/><path transform="translate(1225 479)" d="M.5 1.5L1.5 .5H5.5L6.5 1.5V3L.5 9.5H7"/><path transform="translate(1234 479)" d="M0 .5H6.5L1.5 9.5"/><path transform="translate(1242 479)" d="M2 .5H4L5.5 2V8L4 9.5H2L.5 8V2ZM4 2.7L2 7"/><circle cx="1254.3" cy="481.1" r="1.8"/>
<path transform="translate(1217 553)" d="M0 5.5H7"/><path transform="translate(1225 553)" d="M.5 1.5L1.5 .5H5.5L6.5 1.5V3.5L5.5 4.5H2.5M5.5 4.5L6.5 5.5V8.5L5.5 9.5H1.5L.5 8.5"/><path transform="translate(1234 553)" d="M2 .5H4L5.5 2V8L4 9.5H2L.5 8V2ZM4 2.7L2 7"/><path transform="translate(1242 553)" d="M2 .5H4L5.5 2V8L4 9.5H2L.5 8V2ZM4 2.7L2 7"/><circle cx="1254.3" cy="555.1" r="1.8"/>
<path transform="translate(1217 628)" d="M0 5.5H7"/><path transform="translate(1225 628)" d="M.5 1.5L1.5 .5H5.5L6.5 1.5V3.5L5.5 4.5H2.5M5.5 4.5L6.5 5.5V8.5L5.5 9.5H1.5L.5 8.5"/><path transform="translate(1234 628)" d="M.5 1.5L1.5 .5H5.5L6.5 1.5V3.5L5.5 4.5H2.5M5.5 4.5L6.5 5.5V8.5L5.5 9.5H1.5L.5 8.5"/><path transform="translate(1242 628)" d="M2 .5H4L5.5 2V8L4 9.5H2L.5 8V2ZM4 2.7L2 7"/><circle cx="1254.3" cy="630.1" r="1.8"/>
<path transform="translate(1217 702)" d="M0 5.5H7"/><path transform="translate(1225 702)" d="M.5 1.5L1.5 .5H5.5L6.5 1.5V3.5L5.5 4.5H2.5M5.5 4.5L6.5 5.5V8.5L5.5 9.5H1.5L.5 8.5"/><path transform="translate(1234 702)" d="M6.5 1.5L5.5 .5H2.5L.5 2.5V8L2 9.5H5L6.5 8V6L5 4.5H2L.5 6"/><path transform="translate(1242 702)" d="M2 .5H4L5.5 2V8L4 9.5H2L.5 8V2ZM4 2.7L2 7"/><circle cx="1254.3" cy="704.1" r="1.8"/>
<path transform="translate(1217 776)" d="M0 5.5H7"/><path transform="translate(1225 776)" d="M.5 1.5L1.5 .5H5.5L6.5 1.5V3.5L5.5 4.5H2.5M5.5 4.5L6.5 5.5V8.5L5.5 9.5H1.5L.5 8.5"/><path transform="translate(1234 776)" d="M.5 8.5L1.5 9.5H4.5L6.5 7.5V2L5 .5H2L.5 2V4L2 5.5H5L6.5 4"/><path transform="translate(1242 776)" d="M2 .5H4L5.5 2V8L4 9.5H2L.5 8V2ZM4 2.7L2 7"/><circle cx="1254.3" cy="778.1" r="1.8"/>
<path transform="translate(1217 850)" d="M0 5.5H7"/><path transform="translate(1225 850)" d="M5.5 .5L.5 6.5H7M5.5 .5V10"/><path transform="translate(1234 850)" d="M.5 1.5L1.5 .5H5.5L6.5 1.5V3L.5 9.5H7"/><path transform="translate(1242 850)" d="M2 .5H4L5.5 2V8L4 9.5H2L.5 8V2ZM4 2.7L2 7"/><circle cx="1254.3" cy="852.1" r="1.8"/>
<path transform="translate(1217 924)" d="M0 5.5H7"/><path transform="translate(1225 924)" d="M5.5 .5L.5 6.5H7M5.5 .5V10"/><path transform="translate(1234 924)" d="M6 .5H.5V4L1.5 3.5H5L6.5 5V8L5 9.5H1.5L.5 8.5"/><path transform="translate(1242 924)" d="M2 .5H4L5.5 2V8L4 9.5H2L.5 8V2ZM4 2.7L2 7"/><circle cx="1254.3" cy="926.1" r="1.8"/>
<path transform="translate(1217 998)" d="M0 5.5H7"/><path transform="translate(1225 998)" d="M5.5 .5L.5 6.5H7M5.5 .5V10"/><path transform="translate(1234 998)" d="M2 .5H5L6.5 1.5V3.2L5 4.5H2L.5 3.2V1.5ZM2 4.5L.5 6V8L2 9.5H5L6.5 8V6L5 4.5"/><path transform="translate(1242 998)" d="M2 .5H4L5.5 2V8L4 9.5H2L.5 8V2ZM4 2.7L2 7"/><circle cx="1254.3" cy="1000.1" r="1.8"/>
<path transform="translate(92 1018)" d="M.5 1.5H2.5L3.5 .5V9.5M1 9.5H6"/><path transform="translate(100 1018)" d="M2 .5H4L5.5 2V8L4 9.5H2L.5 8V2ZM4 2.7L2 7"/><path transform="translate(109 1018)" d="M.5 0V10M5.5 0V10M.5 4.5H5.5"/><path transform="translate(117 1018)" d="M0 2.5H6L.5 9.5H6.5"/>
<path transform="translate(420 1018)" d="M.5 1.5H2.5L3.5 .5V9.5M1 9.5H6"/><path transform="translate(428 1018)" d="M2 .5H4L5.5 2V8L4 9.5H2L.5 8V2ZM4 2.7L2 7"/><path transform="translate(437 1018)" d="M2 .5H4L5.5 2V8L4 9.5H2L.5 8V2ZM4 2.7L2 7"/><path transform="translate(445 1018)" d="M.5 0V10M5.5 0V10M.5 4.5H5.5"/><path transform="translate(454 1018)" d="M0 2.5H6L.5 9.5H6.5"/>
<path transform="translate(756 1018)" d="M.5 1.5H2.5L3.5 .5V9.5M1 9.5H6"/><path transform="translate(764 1018)" d="M.5 0V10M6 .3L.7 5.5M2.5 3.8L6.7 9.8"/><path transform="translate(773 1018)" d="M.5 0V10M5.5 0V10M.5 4.5H5.5"/><path transform="translate(781 1018)" d="M0 2.5H6L.5 9.5H6.5"/>
<path transform="translate(1084 1018)" d="M.5 1.5H2.5L3.5 .5V9.5M1 9.5H6"/><path transform="translate(1092 1018)" d="M2 .5H4L5.5 2V8L4 9.5H2L.5 8V2ZM4 2.7L2 7"/><path transform="translate(1101 1018)" d="M.5 0V10M6 .3L.7 5.5M2.5 3.8L6.7 9.8"/><path transform="translate(1109 1018)" d="M.5 0V10M5.5 0V10M.5 4.5H5.5"/><path transform="translate(1118 1018)" d="M0 2.5H6L.5 9.5H6.5"/>
</g>
<g shape-rendering="geometricPrecision" stroke="#22ff3a" stroke-width="1.25" fill="none" stroke-linejoin="round">
<path transform="translate(630 98)" d="M1.4 .2L4.5 9.6L7.6 .2"/><path transform="translate(639 98)" d="M4.6 -1L3.5 .8V8.6L4.6 10.4"/><path transform="translate(647 98)" d="M2.7 2.5H5.3L6.5 3.8V8.2L5.3 9.5H2.7L1.5 8.2V3.8Z"/><path transform="translate(656 98)" d="M1.5 2V8.2L2.5 9.5H5L6.5 8M6.5 2V10"/><path transform="translate(664 98)" d="M3.5 -.2V8.3L4.5 9.5H6.6M.8 2.5H6.6"/><path transform="translate(673 98)" d="M3.5 -1L4.5 .8V8.6L3.5 10.4"/>
</g>
</svg>
<svg width="1318" height="1106" style="position:absolute;left:0;top:0">
<g>
<path d="M609.4 41.4H616L620.8 46.2V56.8H609.4Z" fill="#1e1e1e"/>
<path d="M610 42H615.7L620.2 46.5V56.2H610Z" fill="#ffffff"/>
<path d="M615.7 42V46.5H620.2Z" fill="#e4e4e4"/>
<rect x="611.2" y="45.3" width="7.2" height="7" fill="#d9d9d9"/>
<path d="M613.4 46.3H618.6L616.6 51.6H611.4Z" fill="#b01010"/>
<path d="M615.2 47.6L614.2 50.4" stroke="#e8d8d8" stroke-width="0.9"/>
<rect x="619" y="49.8" width="1.2" height="7.2" fill="#f0402e"/>
<rect x="621" y="49.8" width="1.2" height="7.2" fill="#f0402e"/>
</g>
<g shape-rendering="crispEdges">
<path fill="#e6e6e6" d="M93 70h3v1h-3zM91 71h7v1h-7zM91 72h7v1h-7zM90 73h9v3h-9zM91 76h7v2h-7zM93 78h3v1h-3z"/>
<path fill="#00f4f4" d="M92 71h3v1h-3zM92 72h1v1h-1zM97 75h2v1h-2zM96 76h2v1h-2zM95 77h2v1h-2z"/>
<path fill="#000000" d="M93 69h3v1h-3zM91 70h2v1h-2zM96 70h2v1h-2zM90 71h1v2h-1zM98 71h1v2h-1zM89 73h1v3h-1zM99 73h1v3h-1zM90 76h1v2h-1zM98 76h1v2h-1zM91 78h2v1h-2zM96 78h2v1h-2zM93 79h3v1h-3z"/>
</g>
<g>
<path d="M99 79L103.4 83.2" stroke="#000" stroke-width="2" stroke-linecap="square"/>
<path d="M88.6 69.4L97.6 82.6" stroke="#ff0000" stroke-width="1.3" stroke-linecap="round"/>
<path d="M100.6 70.4L88.6 79.4" stroke="#ff0000" stroke-width="1.3" stroke-linecap="round"/>
</g>
<g shape-rendering="crispEdges">
<path fill="#000000" d="M141 68h1v15h-1zM140 82h16v1h-16zM140 70h1v1h-1zM140 73h1v1h-1zM140 76h1v1h-1zM140 79h1v1h-1zM141 83h1v1h-1zM144 83h1v1h-1zM147 83h1v1h-1zM150 83h1v1h-1zM153 83h1v1h-1zM145 71h1v7h-1zM144 72h3v1h-3zM144 76h3v1h-3zM153 68h1v13h-1zM152 69h3v1h-3zM151 70h1v1h-1zM155 70h1v1h-1zM151 78h1v1h-1zM155 78h1v1h-1zM152 79h3v1h-3z"/>
<path fill="#ff2a10" d="M150 68h2v1h-2zM148 69h2v1h-2zM146 70h2v1h-2zM146 78h2v1h-2zM148 79h2v1h-2zM150 80h2v1h-2z"/>
<path fill="#0000ff" d="M199 69h3v1h-3zM205 69h2v1h-2zM198 70h1v1h-1zM202 70h3v1h-3zM207 70h1v1h-1z"/>
<path fill="#b00000" d="M201 72h1v1h-1z"/>
<path fill="#000000" d="M200 73h1v1h-1zM199 74h1v1h-1zM197 73h1v4h-1zM197 76h4v1h-4zM198 75h1v1h-1zM193 75h1v8h-1zM192 76h1v1h-1zM192 79h1v1h-1zM192 82h10v1h-10zM193 83h1v1h-1zM196 83h1v1h-1zM199 83h1v1h-1z"/>
<path fill="#ff0000" d="M195 79h3v1h-3zM201 79h1v1h-1zM194 80h1v1h-1zM198 80h3v1h-3z"/>
<path fill="#000000" d="M250 68h5v1h-5zM245 69h2v1h-2zM249 69h1v1h-1zM255 69h2v1h-2zM244 70h1v4h-1zM247 70h2v1h-2zM257 70h1v1h-1zM258 71h1v1h-1zM259 72h1v4h-1zM247 73h2v1h-2zM255 73h3v1h-3zM245 74h2v1h-2zM249 74h6v1h-6zM258 74h1v1h-1z"/>
<path fill="#ffffff" d="M250 69h5v1h-5zM245 70h2v1h-2zM249 70h8v1h-8zM245 71h13v1h-13zM245 72h14v1h-14zM245 73h2v1h-2zM249 73h6v1h-6zM258 73h1v1h-1z"/>
<path fill="#cfcfcf" d="M250 71h5v3h-5zM246 72h1v2h-1z"/>
<path fill="#000090" d="M251 75h1v4h-1zM250 79h2v4h-2z"/>
<path fill="#0000c8" d="M252 75h1v4h-1zM252 79h1v4h-1z"/>
<path fill="#0010ff" d="M253 75h1v4h-1zM253 79h2v4h-2z"/>
</g>
</svg>
</body></html>
